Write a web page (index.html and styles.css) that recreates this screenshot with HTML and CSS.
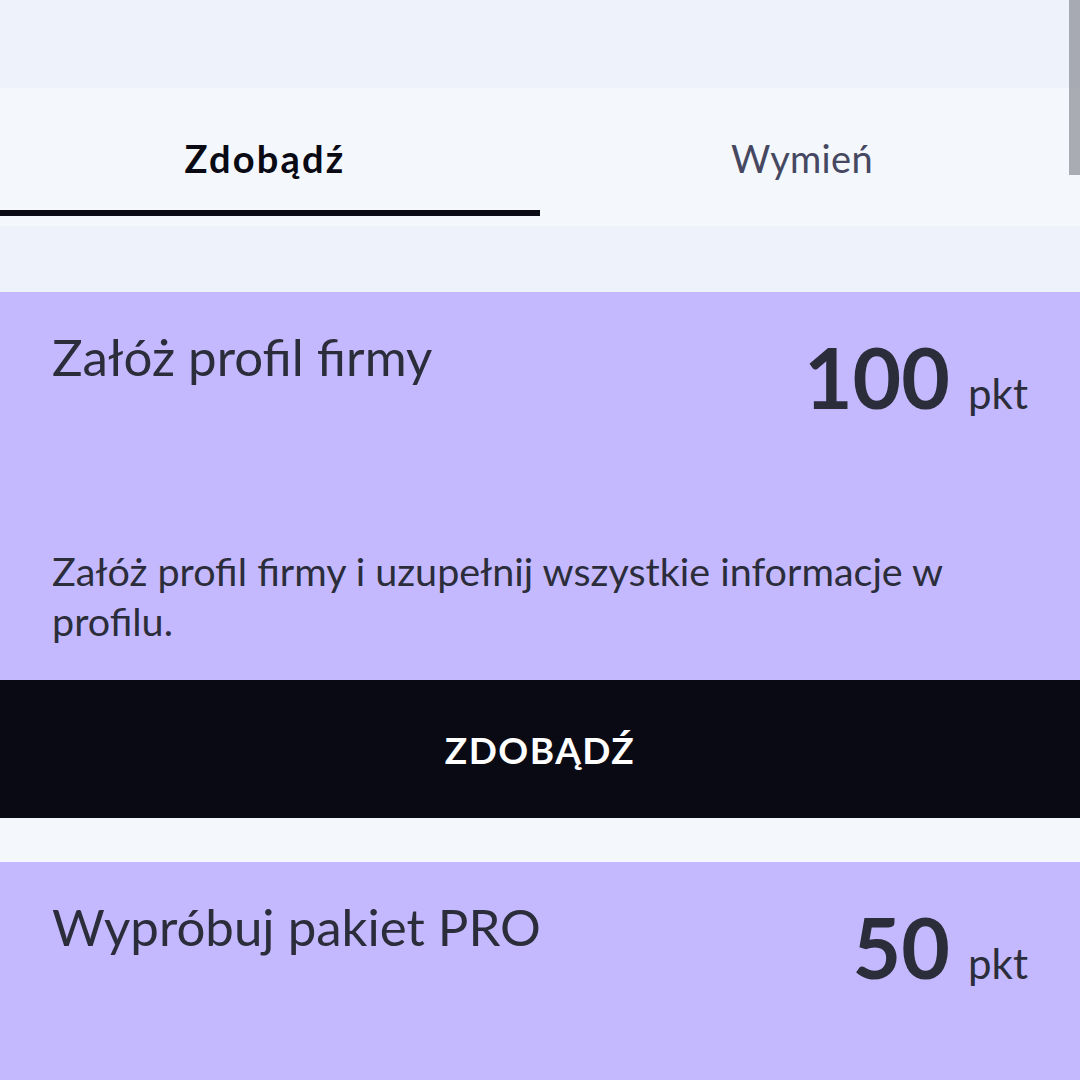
FILE: index.html
```html
<!DOCTYPE html>
<html lang="pl">
<head>
<meta charset="utf-8">
<link rel="stylesheet" href="styles.css">
</head>
<body>
<div class="topbar"></div>
<nav class="tabs">
  <div class="tab tab-left active">Zdobądź</div>
  <div class="tab tab-right">Wymień</div>
</nav>
<div class="scrollthumb"></div>
<div class="spacer"></div>
<main class="list">
  <section class="card">
    <div class="card-body">
      <div class="card-head">
        <h2 class="card-title">Załóż profil firmy</h2>
        <div class="points"><span class="num">100</span><span class="unit">pkt</span></div>
      </div>
      <p class="card-desc">Załóż profil firmy i uzupełnij wszystkie informacje w profilu.</p>
    </div>
    <button class="cta">ZDOBĄDŹ</button>
  </section>
  <section class="card">
    <div class="card-body">
      <div class="card-head">
        <h2 class="card-title">Wypróbuj pakiet PRO</h2>
        <div class="points"><span class="num">50</span><span class="unit">pkt</span></div>
      </div>
    </div>
  </section>
</main>
</body>
</html>
```
FILE: styles.css
```css
html, body {
  margin: 0;
  padding: 0;
}
body {
  background: #eef2fb;
  font-family: "Lato", "Open Sans", sans-serif;
  color: #2b2d3a;
  width: 1080px;
  height: 1080px;
  overflow: hidden;
  position: relative;
}
.topbar {
  height: 88px;
}
.tabs {
  display: flex;
  background: #f4f7fc;
  padding-bottom: 10px;
}
.tab {
  flex: 0 0 50%;
  box-sizing: border-box;
  height: 128px;
  display: flex;
  align-items: center;
  justify-content: center;
  padding-top: 17px;
  font-size: 38px;
  color: #454860;
  border-bottom: 6px solid transparent;
}
.tab-left {
  padding-right: 10px;
}
.tab-right {
  padding-right: 16px;
  letter-spacing: 0.3px;
}
.tab.active {
  font-weight: 700;
  color: #0a0a14;
  border-bottom-color: #0a0a14;
  letter-spacing: 2.2px;
}
.scrollthumb {
  position: absolute;
  top: 0;
  right: 0;
  width: 11px;
  height: 175px;
  background: rgba(80, 80, 90, 0.45);
}
.spacer {
  height: 66px;
}
.list {
  background: #f4f7fc;
  display: flex;
  flex-direction: column;
  gap: 44px;
}
.card {
  background: #c4b9fe;
}
.card-body {
  height: 388px;
  box-sizing: border-box;
  padding: 33px 52px 34px 52px;
  display: flex;
  flex-direction: column;
  justify-content: space-between;
}
.card-head {
  display: flex;
  justify-content: space-between;
  align-items: flex-start;
}
.card-title {
  margin: 0;
  font-size: 51px;
  font-weight: 400;
  line-height: 64px;
}
.points {
  display: flex;
  align-items: baseline;
  gap: 18px;
  margin-top: 2px;
}
.num {
  font-size: 84px;
  font-weight: 700;
  line-height: 100px;
}
.unit {
  font-size: 42px;
}
.card-desc {
  margin: 0;
  font-size: 39.5px;
  line-height: 50px;
}
.cta {
  display: block;
  width: 100%;
  height: 138px;
  border: 0;
  background: #0a0a14;
  color: #ffffff;
  font-family: inherit;
  font-size: 37px;
  font-weight: 700;
  letter-spacing: 1.5px;
}
```
